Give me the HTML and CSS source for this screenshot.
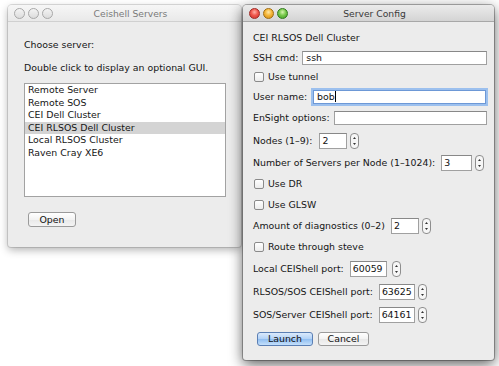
FILE: index.html
```html
<!DOCTYPE html>
<html>
<head>
<meta charset="utf-8">
<link rel="stylesheet" href="styles.css">
</head>
<body>
<div class="desk">
  <div class="win win-left">
    <div class="titlebar">
      <div class="lights">
        <span class="light light-off"></span>
        <span class="light light-off"></span>
        <span class="light light-off"></span>
      </div>
      <div class="title title-off">Ceishell Servers</div>
      <div class="tb-spacer"></div>
    </div>
    <div class="left-body">
      <p class="text">Choose server:</p>
      <p class="text text-gap">Double click to display an optional GUI.</p>
      <ul class="list">
        <li>Remote Server</li>
        <li>Remote SOS</li>
        <li>CEI Dell Cluster</li>
        <li class="sel">CEI RLSOS Dell Cluster</li>
        <li>Local RLSOS Cluster</li>
        <li>Raven Cray XE6</li>
      </ul>
      <div class="btn-row"><button class="btn btn-open">Open</button></div>
    </div>
  </div>

  <div class="win win-right">
    <div class="titlebar titlebar-active">
      <div class="lights">
        <span class="light light-red"></span>
        <span class="light light-yellow"></span>
        <span class="light light-green"></span>
      </div>
      <div class="title">Server Config</div>
      <div class="tb-spacer"></div>
    </div>
    <div class="form">
      <div class="row"><span class="lbl">CEI RLSOS Dell Cluster</span></div>
      <div class="row row-tf"><span class="lbl">SSH cmd:</span><span class="tf tf-grow">ssh</span></div>
      <div class="row"><span class="cb"></span><span class="lbl">Use tunnel</span></div>
      <div class="row row-tf"><span class="lbl">User name:</span><span class="tf tf-grow tf-focus">bob<span class="caret"></span></span></div>
      <div class="row row-tf"><span class="lbl">EnSight options:</span><span class="tf tf-grow"></span></div>
      <div class="row row-sp row-nodes"><span class="lbl">Nodes (1–9):</span><span class="tf tf-spin w28">2</span><svg class="spin" width="9" height="16" viewBox="0 0 9 16"><rect x="0.5" y="0.5" width="8" height="15" rx="3.5" fill="#f6f6f6" stroke="#8e8e8e"/><polygon points="3,6 6,6 4.5,4" fill="#333"/><polygon points="3,10 6,10 4.5,12" fill="#333"/></svg></div>
      <div class="row row-sp"><span class="lbl">Number of Servers per Node (1–1024):</span><span class="tf tf-spin w31">3</span><svg class="spin" width="9" height="16" viewBox="0 0 9 16"><rect x="0.5" y="0.5" width="8" height="15" rx="3.5" fill="#f6f6f6" stroke="#8e8e8e"/><polygon points="3,6 6,6 4.5,4" fill="#333"/><polygon points="3,10 6,10 4.5,12" fill="#333"/></svg></div>
      <div class="row"><span class="cb"></span><span class="lbl">Use DR</span></div>
      <div class="row"><span class="cb"></span><span class="lbl">Use GLSW</span></div>
      <div class="row row-sp"><span class="lbl">Amount of diagnostics (0–2)</span><span class="tf tf-spin w28">2</span><svg class="spin" width="9" height="16" viewBox="0 0 9 16"><rect x="0.5" y="0.5" width="8" height="15" rx="3.5" fill="#f6f6f6" stroke="#8e8e8e"/><polygon points="3,6 6,6 4.5,4" fill="#333"/><polygon points="3,10 6,10 4.5,12" fill="#333"/></svg></div>
      <div class="row"><span class="cb"></span><span class="lbl">Route through steve</span></div>
      <div class="row row-sp"><span class="lbl">Local CEIShell port:</span><span class="tf tf-spin w37">60059</span><svg class="spin spin-wide" width="9" height="16" viewBox="0 0 9 16"><rect x="0.5" y="0.5" width="8" height="15" rx="3.5" fill="#f6f6f6" stroke="#8e8e8e"/><polygon points="3,6 6,6 4.5,4" fill="#333"/><polygon points="3,10 6,10 4.5,12" fill="#333"/></svg></div>
      <div class="row row-sp"><span class="lbl">RLSOS/SOS CEIShell port:</span><span class="tf tf-spin w36">63625</span><svg class="spin" width="9" height="16" viewBox="0 0 9 16"><rect x="0.5" y="0.5" width="8" height="15" rx="3.5" fill="#f6f6f6" stroke="#8e8e8e"/><polygon points="3,6 6,6 4.5,4" fill="#333"/><polygon points="3,10 6,10 4.5,12" fill="#333"/></svg></div>
      <div class="row row-sp"><span class="lbl">SOS/Server CEIShell port:</span><span class="tf tf-spin w36">64161</span><svg class="spin" width="9" height="16" viewBox="0 0 9 16"><rect x="0.5" y="0.5" width="8" height="15" rx="3.5" fill="#f6f6f6" stroke="#8e8e8e"/><polygon points="3,6 6,6 4.5,4" fill="#333"/><polygon points="3,10 6,10 4.5,12" fill="#333"/></svg></div>
      <div class="row row-btns"><button class="btn btn-primary">Launch</button><button class="btn btn-cancel">Cancel</button></div>
    </div>
  </div>
</div>
</body>
</html>
```
FILE: styles.css
```css
* { box-sizing: border-box; }
html, body { margin: 0; padding: 0; }
body {
  width: 499px;
  height: 366px;
  overflow: hidden;
  background: #ffffff;
  font-family: "DejaVu Sans", sans-serif;
  font-size: 9.4px;
  color: #151515;
}
.desk {
  display: flex;
  align-items: flex-start;
  gap: 2px;
  padding: 5px 0 0 8px;
}
.win {
  background: #ececec;
  border-radius: 4px 4px 3px 3px;
  display: flex;
  flex-direction: column;
}
.win-left {
  width: 233px;
  height: 242px;
  box-shadow: 0 0 0 1px rgba(0,0,0,0.12), 0 3px 9px rgba(0,0,0,0.3);
}
.win-right {
  width: 251px;
  height: 355px;
  position: relative;
  z-index: 2;
  box-shadow: 0 0 0 1px rgba(0,0,0,0.28), 0 4px 14px rgba(0,0,0,0.65);
}
.titlebar {
  height: 17px;
  flex: none;
  display: flex;
  align-items: center;
  border-radius: 4px 4px 0 0;
  background: linear-gradient(#f6f6f6, #e9e9e9);
  border-bottom: 1px solid #d0d0d0;
}
.titlebar-active {
  background: linear-gradient(#ebebeb, #d4d4d4);
  border-bottom: 1px solid #a8a8a8;
}
.lights {
  width: 48px;
  flex: none;
  display: flex;
  gap: 3px;
  padding-left: 6px;
}
.light {
  width: 11px;
  height: 11px;
  border-radius: 50%;
  display: block;
}
.light-off {
  background: linear-gradient(#f4f4f4, #dcdcdc);
  border: 1px solid #a8a8a8;
}
.light-red {
  background: radial-gradient(circle at 50% 35%, #ffb2a8 0, #f0574c 45%, #c9302a 100%);
  border: 1px solid #9f2a25;
}
.light-yellow {
  background: radial-gradient(circle at 50% 35%, #ffe8a8 0, #f5b638 45%, #d08a12 100%);
  border: 1px solid #a06c10;
}
.light-green {
  background: radial-gradient(circle at 50% 35%, #d8f5b0 0, #78c94c 45%, #3f9a24 100%);
  border: 1px solid #2f7a1b;
}
.title {
  flex: 1;
  text-align: center;
  font-size: 9.2px;
  color: #3a3a3a;
  white-space: nowrap;
}
.title-off { color: #7a7a7a; }
.tb-spacer { width: 36px; flex: none; }

/* left window */
.left-body {
  display: flex;
  flex-direction: column;
  padding: 16px 15px 0 16px;
}
.text {
  margin: 0;
  line-height: 14px;
  white-space: nowrap;
}
.text-gap { margin-top: 9px; }
.list {
  list-style: none;
  margin: 8px 0 0;
  padding: 0;
  height: 114px;
  background: #ffffff;
  border: 1px solid #a2a2a2;
}
.list li {
  line-height: 12.6px;
  height: 12.6px;
  padding-left: 3px;
  white-space: nowrap;
}
.list li.sel { background: #d4d4d4; }
.btn-row {
  display: flex;
  padding-left: 4px;
  margin-top: 15px;
}
.btn {
  font-family: "DejaVu Sans", sans-serif;
  font-size: 9.4px;
  color: #111;
  height: 15px;
  padding: 0;
  border: 1px solid #9a9a9a;
  border-radius: 3px;
  background: linear-gradient(#ffffff, #f3f3f3 50%, #e8e8e8 51%, #f4f4f4);
  line-height: 12px;
}
.btn-open { width: 48px; }

/* right window */
.form {
  display: grid;
  grid-template-rows: 20px 19px 20px 19px 23px 23px 22px 20px 21px 21px 22px 22px 23px 24px 24px;
  padding: 6px 7px 9px 10px;
}
.row {
  display: flex;
  align-items: center;
  gap: 6px;
  white-space: nowrap;
}
.row-tf { gap: 4px; }
.row-nodes .tf { margin-left: 1px; }
.lbl { line-height: 12px; }
.tf {
  height: 14px;
  background: #ffffff;
  border: 1px solid #a0a0a0;
  border-top-color: #888;
  padding: 0 3px;
  line-height: 12px;
  color: #111;
  display: flex;
  align-items: center;
  overflow: hidden;
}
.tf-grow { flex: 1; }
.tf-focus {
  border-color: #6d98d6;
  box-shadow: 0 0 0 2px #9cc0ee;
  margin-left: 2px;
  margin-right: 1px;
}
.caret {
  display: inline-block;
  width: 1px;
  height: 11px;
  background: #000;
}
.tf-spin { height: 16px; padding: 0 2px; flex: none; }
.spin { display: block; margin-left: -3px; flex: none; }
.spin-wide { margin-left: -1px; }
.w28 { width: 28px; }
.w31 { width: 31px; }
.w36 { width: 36px; }
.w37 { width: 37px; }
.cb {
  width: 10px;
  height: 10px;
  margin-left: 1px;
  margin-right: -2px;
  border: 1px solid #8a8a8a;
  border-radius: 2px;
  background: linear-gradient(#ffffff, #ececec);
  flex: none;
}
.row-btns { gap: 5px; padding-left: 4px; }
.btn-primary {
  width: 56px;
  height: 14px;
  border: 1px solid #5b7fb4;
  background: linear-gradient(#dbeafc, #b0d1f7 50%, #8fbdf0 51%, #c4e0fc);
}
.btn-cancel {
  width: 51px;
  height: 14px;
}
```
